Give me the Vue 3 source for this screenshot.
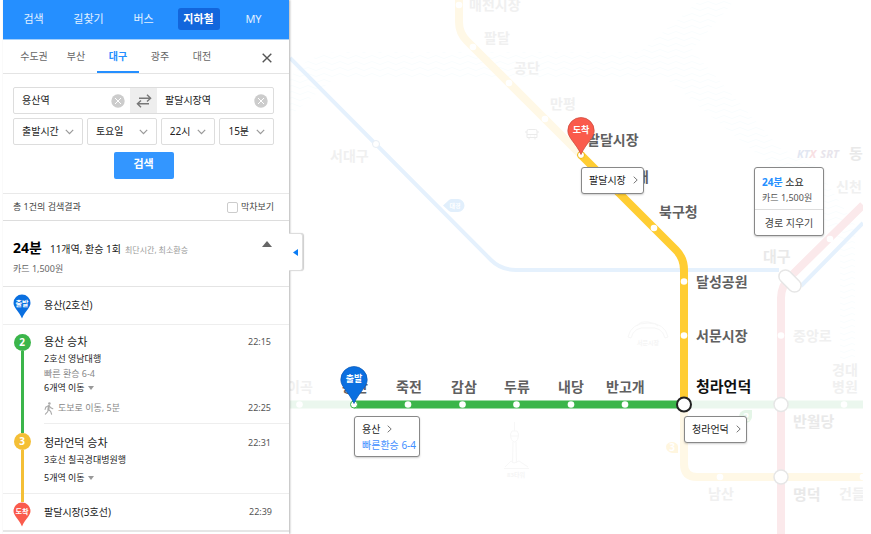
<template>
  <div class="page">
    <aside class="panel">
      <nav class="main-nav">
        <a v-for="menu in menus" :key="menu" href="#" :class="{ active: menu === '지하철' }"><span>{{ menu }}</span></a>
      </nav>

      <div class="city-bar">
        <a v-for="c in cities" :key="c" href="#" :class="{ active: c === city }" @click.prevent="city = c">{{ c }}</a>
        <button class="close" type="button" aria-label="닫기">
          <svg width="10" height="10" viewBox="0 0 10 10"><path d="M0.7 0.7L9.3 9.3M9.3 0.7L0.7 9.3" stroke="#555" stroke-width="1.4" /></svg>
        </button>
      </div>

      <form class="search" @submit.prevent>
        <div class="stations">
          <div class="field">
            <input v-model="from" type="text" aria-label="출발역" />
            <button type="button" class="clear" aria-label="출발역 지우기" @click="from = ''">
              <svg width="14" height="14" viewBox="0 0 14 14"><circle cx="7" cy="7" r="6.7" fill="#ccc" /><path d="M4 4l6 6M10 4l-6 6" stroke="#fff" /></svg>
            </button>
          </div>
          <button type="button" class="swap" aria-label="출발 도착 바꾸기" @click="swap">
            <svg width="16" height="14" viewBox="0 0 16 14" fill="none" stroke="#777" stroke-width="1.4">
              <path d="M3 4.3H14.5M11 0.8L14.6 4.3L11 7.6M13 9.7H1.5M5 6.4L1.4 9.7L5 13.2" />
            </svg>
          </button>
          <div class="field">
            <input v-model="to" type="text" aria-label="도착역" />
            <button type="button" class="clear" aria-label="도착역 지우기" @click="to = ''">
              <svg width="14" height="14" viewBox="0 0 14 14"><circle cx="7" cy="7" r="6.7" fill="#ccc" /><path d="M4 4l6 6M10 4l-6 6" stroke="#fff" /></svg>
            </button>
          </div>
        </div>
        <div class="times">
          <label v-for="s in selects" :key="s.label" class="pick" :class="s.size">
            <select :aria-label="s.label"><option>{{ s.value }}</option></select>
            <svg width="9" height="6" viewBox="0 0 9 6"><path d="M0.8 0.8L4.5 4.6L8.2 0.8" fill="none" stroke="#999" stroke-width="1.2" /></svg>
          </label>
        </div>
        <button class="submit" type="submit">검색</button>
      </form>

      <div class="result-bar">
        <span>총 1건의 검색결과</span>
        <label class="last-train"><input type="checkbox" />막차보기</label>
      </div>

      <section class="summary">
        <div class="summary-line">
          <strong>24분</strong>
          <span class="count">11개역, 환승 1회</span>
          <span class="tags">최단시간, 최소환승</span>
          <button type="button" aria-label="접기">
            <svg width="10" height="6" viewBox="0 0 10 6"><path d="M5 0L10 6H0z" fill="#666" /></svg>
          </button>
        </div>
        <div class="fare">카드 1,500원</div>
      </section>

      <div class="stop start">
        <div class="rail">
          <svg width="18" height="25" viewBox="0 0 28 38"><path :d="pinPath" fill="#0a6fe0" /><text x="14" y="18" class="pin-text">출발</text></svg>
        </div>
        <div class="stop-name">용산(2호선)</div>
      </div>

      <div class="step step-first">
        <div class="rail green">
          <i class="lead"></i><b class="line-no">2</b><i class="track"></i>
        </div>
        <div class="step-body">
          <div class="title">용산 승차<time>22:15</time></div>
          <div class="bound">2호선 영남대행</div>
          <div class="fast">빠른 환승 6-4</div>
          <button type="button" class="move">6개역 이동<svg width="6" height="4" viewBox="0 0 6 4"><path d="M0 0H6L3 4z" fill="#999" /></svg></button>
          <div class="walk">
            <svg width="10" height="13" viewBox="0 0 10 13" fill="none" stroke="#aaa" stroke-width="1.1" stroke-linecap="round">
              <circle cx="5.4" cy="1.5" r="1.3" fill="#aaa" stroke="none" />
              <path d="M4.9 4L4.4 7.4" stroke-width="2" />
              <path d="M4.5 7.6L6.6 9.4L7.6 12.2M4.3 7.6L3.6 9.8L1.4 12.2M4.4 3.8L1.8 5.2L1.1 7.4M5.4 4L6.8 5.8L8.8 6.8" />
            </svg>
            도보로 이동, 5분<time>22:25</time>
          </div>
        </div>
      </div>

      <div class="step step-second">
        <div class="rail yellow">
          <i class="lead from-green"></i><b class="line-no">3</b><i class="track"></i>
        </div>
        <div class="step-body">
          <div class="title">청라언덕 승차<time>22:31</time></div>
          <div class="bound">3호선 칠곡경대병원행</div>
          <button type="button" class="move">5개역 이동<svg width="6" height="4" viewBox="0 0 6 4"><path d="M0 0H6L3 4z" fill="#999" /></svg></button>
        </div>
      </div>

      <div class="stop end">
        <div class="rail">
          <i class="lead from-yellow"></i>
          <svg width="18" height="25" viewBox="0 0 28 38"><path :d="pinPath" fill="#fa5b4c" /><text x="14" y="18" class="pin-text">도착</text></svg>
        </div>
        <div class="stop-name">팔달시장(3호선)</div>
        <time>22:39</time>
      </div>
    </aside>

    <main class="map">
      <button class="fold" type="button" aria-label="패널 접기">
        <svg width="5" height="7" viewBox="0 0 5 7"><path d="M5 0V7L0 3.5z" fill="#0a7cf5" /></svg>
      </button>

      <svg class="canvas" width="573" height="534" viewBox="290 0 573 534">
        <defs>
          <pattern id="waves" width="16" height="6" patternUnits="userSpaceOnUse">
            <path d="M0 3Q4 0 8 3T16 3" fill="none" stroke="#f9fdfe" />
          </pattern>
        </defs>
        <path d="M290 77Q310 52 340 52H640L700 0H735L692 50L780 148L815 165L855 225V360H840V240L770 165L665 78H335L290 116z" fill="url(#waves)" />

        <!-- lines outside the route -->
        <g fill="none">
          <path d="M290 58L491 260Q501 270 516 270H779M801 286L863 223" stroke="#e5f1fd" stroke-width="4" />
          <path d="M781 534V298Q781 286 790 277L863 205" stroke="#fbe9eb" stroke-width="8" />
          <path d="M290 404.5H354M684 404.5H863" stroke="#ebf7ee" stroke-width="8" />
          <path d="M459 0V22Q459 33 467 41L581 155M684 404V464Q684 477 697 477H863" stroke="#fff8e6" stroke-width="8" />
        </g>

        <!-- selected route -->
        <g fill="none" stroke-width="8">
          <path d="M354 404.5H684" stroke="#3bb54a" />
          <path d="M581 155L676 250Q684 258 684 270V404" stroke="#ffcd33" />
        </g>

        <circle v-for="(d, i) in dots" :key="i" :cx="d[0]" :cy="d[1]" r="3.3" fill="#fff" />
        <circle cx="376" cy="144" r="3.5" fill="#fff" stroke="#e8eef4" />
        <circle cx="354" cy="404.5" r="3.5" fill="#fff" stroke="#3bb54a" />
        <circle cx="581" cy="155" r="3.5" fill="#fff" stroke="#f0b90f" />
        <circle cx="684" cy="404.5" r="7" fill="#fff" stroke="#222" stroke-width="2" />
        <circle cx="781" cy="404.5" r="7" fill="#fff" stroke="#e6e6e6" stroke-width="1.5" />
        <circle cx="781" cy="477" r="7" fill="#fff" stroke="#e6e6e6" stroke-width="1.5" />
        <rect x="777" y="274.5" width="26" height="13" rx="6.5" transform="rotate(45 790 281)" fill="#fff" stroke="#e6e6e6" stroke-width="1.5" />

        <!-- line badges -->
        <path d="M443 205.5L449 200Q450 199 452 199H458A6.5 6.5 0 0 1 458 212H452Q450 212 449 211z" fill="#e1effc" />
        <text x="455" y="208" class="tiny white">대경</text>
        <path d="M666 446A6.5 6.5 0 0 1 678 446V453H672A6.5 6.5 0 0 1 666 446z" fill="#fff6df" />
        <text x="672" y="451" class="badge white">3</text>
        <path d="M752 410V417A6.5 6.5 0 1 1 745 410z" fill="#e4f5e7" />
        <text x="746" y="421" class="badge white">2</text>

        <!-- landmarks -->
        <g fill="none" stroke="#ebebeb">
          <path d="M528.5 129.5H535.5Q537 129.5 537 131V137.5H527V131Q527 129.5 528.5 129.5zM527 134.5H537M526 131V133M538 131V133M529 137.5V139.5M535 137.5V139.5M530 136H530.5M534 136H534.5" />
        </g>
        <g fill="none" stroke="#f7f7f7">
          <path d="M514.5 422V431M512 431H517L518.5 434Q518.5 441 514.5 442Q510.5 441 510.5 434zM511 436H518M513 442L512.5 463M516 442L516.5 463M505 467L511 461L514 463L519 461L528 467M504 468.5H529" />
          <path d="M628 337Q631 323 648 323T668 337L665 338Q662 326 648 328Q634 326 631 338zM637 326Q640 321 648 322T658 326" />
        </g>
        <text x="516" y="477" class="tiny pale">83타워</text>
        <text x="648" y="345" class="tiny pale">서문시장</text>
        <text x="797" y="158" class="rail-logo"><tspan fill="#e2e7f2">KT</tspan><tspan fill="#f8e0e3">X</tspan><tspan dx="4" fill="#e8e5ec">SRT</tspan></text>

        <text v-for="l in labels" :key="l.name" :x="l.x" :y="l.y" :class="['station', l.type]">{{ l.name }}</text>

        <!-- pins -->
        <g transform="translate(567 117)"><path :d="pinPath" fill="#fa5b4c" stroke="#c9473b" stroke-width="0.7" /><text x="14" y="16" class="map-pin">도착</text></g>
        <g transform="translate(340 366)"><path :d="pinPath" fill="#0a6fe0" stroke="#0858b4" stroke-width="0.7" /><text x="14" y="16" class="map-pin">출발</text></g>
      </svg>

      <a href="#" class="callout arrive">팔달시장<svg class="more" width="5" height="8" viewBox="0 0 5 8"><path d="M0.7 0.7L4.2 4L0.7 7.3" fill="none" stroke="#777" /></svg></a>
      <a href="#" class="callout depart">
        <span>용산<svg class="more" width="5" height="8" viewBox="0 0 5 8"><path d="M0.7 0.7L4.2 4L0.7 7.3" fill="none" stroke="#777" /></svg></span>
        <em>빠른환승 6-4</em>
      </a>
      <a href="#" class="callout transfer">청라언덕<svg class="more" width="5" height="8" viewBox="0 0 5 8"><path d="M0.7 0.7L4.2 4L0.7 7.3" fill="none" stroke="#777" /></svg></a>

      <div class="callout info">
        <p class="info-time"><strong>24분</strong> 소요</p>
        <p class="info-fare">카드 1,500원</p>
        <button type="button">경로 지우기</button>
      </div>
    </main>
  </div>
</template>

<script setup>
import { ref } from 'vue'

const menus = ['검색', '길찾기', '버스', '지하철', 'MY']
const cities = ['수도권', '부산', '대구', '광주', '대전']
const city = ref('대구')

const from = ref('용산역')
const to = ref('팔달시장역')

const swap = () => {
  const temp = from.value
  from.value = to.value
  to.value = temp
}

const selects = [
  { label: '시간 기준', value: '출발시간', size: 'wide' },
  { label: '요일', value: '토요일', size: 'wide' },
  { label: '시', value: '22시', size: 'narrow' },
  { label: '분', value: '15분', size: 'narrow' }
]

const pinPath = 'M14 0.5A13.2 13.2 0 0 1 27.2 13.7C27.2 21 19 26 14 37.5C9 26 0.8 21 0.8 13.7A13.2 13.2 0 0 1 14 0.5z'

const dots = [
  [459, 5], [473, 47], [509, 83], [545, 119], [617, 191], [654, 228],
  [684, 281.5], [684, 335.5],
  [299.5, 404.5], [408, 404.5], [462.5, 404.5], [516.5, 404.5], [571, 404.5], [625, 404.5], [844, 404.5],
  [830, 239], [781, 335.5], [720, 477], [863, 477]
]

const labels = [
  { name: '매천시장', x: 469, y: 10, type: 'off' },
  { name: '팔달', x: 484, y: 43, type: 'off' },
  { name: '공단', x: 514, y: 73, type: 'off' },
  { name: '만평', x: 550, y: 109, type: 'off' },
  { name: '서대구', x: 330, y: 161, type: 'off' },
  { name: '이곡', x: 287, y: 392, type: 'off' },
  { name: '동', x: 849, y: 159, type: 'off major' },
  { name: '신천', x: 836, y: 192, type: 'off' },
  { name: '대구', x: 763, y: 262, type: 'off major' },
  { name: '중앙로', x: 793, y: 341, type: 'off' },
  { name: '경대', x: 832, y: 375, type: 'off' },
  { name: '병원', x: 832, y: 392, type: 'off' },
  { name: '반월당', x: 793, y: 427, type: 'off major' },
  { name: '명덕', x: 793, y: 500, type: 'off major' },
  { name: '남산', x: 708, y: 499, type: 'off' },
  { name: '건들', x: 839, y: 499, type: 'off' },
  { name: '팔달시장', x: 587, y: 145, type: 'on' },
  { name: '원대', x: 623, y: 182, type: 'on' },
  { name: '북구청', x: 659, y: 217, type: 'on' },
  { name: '달성공원', x: 696, y: 287, type: 'on' },
  { name: '서문시장', x: 696, y: 341, type: 'on' },
  { name: '청라언덕', x: 696, y: 392, type: 'hub' },
  { name: '용산', x: 342, y: 392, type: 'on' },
  { name: '죽전', x: 396, y: 392, type: 'on' },
  { name: '감삼', x: 451, y: 392, type: 'on' },
  { name: '두류', x: 504, y: 392, type: 'on' },
  { name: '내당', x: 558, y: 392, type: 'on' },
  { name: '반고개', x: 606, y: 392, type: 'on' }
]
</script>

<style>
body {
  background: #fff;
}
</style>

<style scoped>
.page {
  display: flex;
  min-height: 100vh;
  padding: 0 8px 0 3px;
  box-sizing: border-box;
  overflow: hidden;
  font-family: "Noto Sans", "Noto Sans CJK KR", sans-serif;
  font-size: 10px;
  line-height: 14px;
  color: #222;
}

.page * {
  box-sizing: border-box;
}

a {
  color: inherit;
  text-decoration: none;
}

button,
input,
select {
  font: inherit;
  color: inherit;
  margin: 0;
  padding: 0;
  border: 0;
  background: none;
}

button {
  cursor: pointer;
}

svg {
  display: block;
  flex: none;
}

.panel {
  position: relative;
  z-index: 1;
  flex: none;
  width: 286px;
  background: #fff;
  box-shadow: 1px 0 2px rgba(0, 0, 0, 0.3);
}

.main-nav {
  display: flex;
  height: 40px;
  padding: 0 0 2px 3px;
  background: #258fff;
  border-bottom: 1px solid #a5d0fb;
  font-size: 11px;
  color: #e3f1ff;
}

.main-nav a {
  display: flex;
  flex: none;
  width: 55px;
  align-items: center;
  justify-content: center;
}

.main-nav span {
  width: 42px;
  line-height: 22px;
  border-radius: 3px;
  text-align: center;
}

.main-nav .active span {
  background: #1266dc;
  color: #fff;
  font-weight: 700;
}

.city-bar {
  display: flex;
  height: 34px;
  padding-left: 10px;
  border-bottom: 1px solid #e4e4e4;
  color: #666;
}

.city-bar a {
  width: 42px;
  line-height: 32px;
  text-align: center;
}

.city-bar .active {
  border-bottom: 2px solid #258fff;
  color: #258fff;
  font-weight: 700;
}

.close {
  margin: 2px 17px 0 auto;
}

.search {
  display: flex;
  flex-direction: column;
  gap: 4px;
  padding: 13px 15px 14px 10px;
  border-bottom: 1px solid #e9e9e9;
}

.stations {
  display: flex;
  height: 27px;
  border: 1px solid #ddd;
  border-radius: 2px;
}

.field {
  display: flex;
  flex: 1;
  min-width: 0;
  align-items: center;
  padding: 0 5px 0 8px;
}

.field input {
  flex: 1;
  min-width: 0;
  height: 23px;
  padding-bottom: 2px;
  outline: none;
}

.swap {
  display: flex;
  width: 27px;
  align-items: center;
  justify-content: center;
  background: #eee;
}

.times {
  display: flex;
  gap: 4px;
}

.pick {
  position: relative;
  display: flex;
  align-items: center;
  height: 27px;
  border: 1px solid #ddd;
  border-radius: 2px;
}

.pick.wide {
  flex: 71;
}

.pick.narrow {
  flex: 55;
}

.pick select {
  width: 100%;
  height: 100%;
  padding: 0 0 2px 8px;
  appearance: none;
  outline: none;
}

.pick svg {
  position: absolute;
  right: 8px;
  pointer-events: none;
}

.submit {
  align-self: center;
  width: 60px;
  height: 27px;
  margin-top: 3px;
  padding-bottom: 3px;
  background: #3396ff;
  border-radius: 2px;
  color: #fff;
  font-size: 11px;
  font-weight: 700;
}

.result-bar {
  display: flex;
  align-items: center;
  justify-content: space-between;
  height: 27px;
  padding: 0 15px 0 10px;
  border-bottom: 1px solid #ddd;
  font-size: 9px;
  color: #444;
}

.last-train {
  display: flex;
  align-items: center;
  gap: 3px;
}

.last-train input {
  width: 11px;
  height: 11px;
  appearance: none;
  border: 1px solid #ccc;
  border-radius: 2px;
}

.summary {
  height: 66px;
  padding: 17px 15px 0 10px;
  border-bottom: 1px solid #e4e4e4;
}

.summary-line {
  display: flex;
  align-items: baseline;
  line-height: 20px;
}

.summary-line strong {
  margin-right: 8px;
  font-size: 14px;
  color: #000;
}

.summary-line .tags {
  margin-left: 4px;
  font-size: 8px;
  color: #999;
}

.summary-line button {
  align-self: flex-start;
  margin: 3px 2px 0 auto;
}

.fare {
  font-size: 9px;
  line-height: 18px;
  color: #666;
}

time {
  margin-left: auto;
  font-size: 9px;
  color: #555;
}

.stop {
  display: flex;
  height: 38px;
  padding: 0 17px 0 10px;
  gap: 13px;
}

.stop.start {
  border-bottom: 1px solid #eee;
}

.stop.start .rail {
  padding-top: 7px;
}

.stop.end {
  border-bottom: 2px solid #e6e6e6;
}

.stop-name,
.stop time {
  line-height: 36px;
}

.rail {
  display: flex;
  flex: none;
  flex-direction: column;
  align-items: center;
  width: 18px;
}

.lead {
  flex: none;
  width: 3px;
  height: 9px;
}

.from-green {
  background: #3bb54a;
}

.from-yellow {
  height: 8px;
  background: #f4bf36;
}

.track {
  flex: 1;
  width: 3px;
}

.line-no {
  width: 17px;
  height: 17px;
  border-radius: 50%;
  color: #fff;
  line-height: 17px;
  text-align: center;
}

.green .line-no,
.green .track {
  background: #3bb54a;
}

.yellow .line-no,
.yellow .track {
  background: #f4bf36;
}

.pin-text {
  fill: #fff;
  font-size: 11px;
  font-weight: 700;
  text-anchor: middle;
}

.step {
  display: flex;
  padding-left: 10px;
  gap: 13px;
  border-bottom: 1px solid #eee;
}

.step-first {
  border-bottom: 0;
}

.step-second .rail {
  margin-bottom: -1px;
}

.step-body {
  display: flex;
  flex: 1;
  flex-direction: column;
  align-items: stretch;
  padding: 8px 0 6px;
  font-size: 9px;
}

.step-first .step-body {
  border-bottom: 1px solid #eee;
}

.step-second .step-body {
  padding: 10px 0 8px;
}

.title {
  display: flex;
  padding-right: 18px;
  font-size: 11px;
  line-height: 18px;
}

.bound {
  line-height: 16px;
}

.fast {
  color: #888;
}

.move {
  display: flex;
  align-items: center;
  gap: 3px;
}

.step-second .move {
  margin-top: 3px;
}

.walk {
  display: flex;
  align-items: center;
  gap: 4px;
  margin-top: 4px;
  padding-right: 18px;
  line-height: 18px;
  color: #888;
}

.map {
  position: relative;
  flex: 1;
  min-width: 0;
  overflow: hidden;
}

.canvas {
  margin-left: 1px;
}

.fold {
  position: absolute;
  z-index: 2;
  top: 233px;
  left: 0;
  display: flex;
  align-items: center;
  width: 14px;
  height: 38px;
  padding-left: 4px;
  background: #fff;
  border: 1px solid #ddd;
  border-left: 0;
  border-radius: 0 3px 3px 0;
  box-shadow: 1px 0 1px rgba(0, 0, 0, 0.2);
}

.station {
  font-size: 14px;
  font-weight: 700;
}

.station.on {
  fill: #606060;
}

.station.off {
  fill: #f0f0f0;
}

.station.major {
  font-size: 15px;
  fill: #e9e9e9;
}

.station.hub {
  font-size: 15px;
  fill: #111;
}

.tiny {
  font-size: 6px;
  font-weight: 700;
  text-anchor: middle;
}

.badge {
  font-size: 10px;
  font-weight: 700;
  text-anchor: middle;
}

.white {
  fill: #fff;
}

.pale {
  fill: #f5f5f5;
}

.rail-logo {
  font-size: 11px;
  font-style: italic;
  font-weight: 700;
}

.map-pin {
  fill: #fff;
  font-size: 9px;
  font-weight: 700;
  text-anchor: middle;
}

.callout {
  position: absolute;
  background: #fff;
  border: 1px solid #888;
  border-radius: 3px;
  box-shadow: 0 1px 2px rgba(0, 0, 0, 0.2);
}

.more {
  display: inline-block;
  margin-left: 7px;
}

.arrive,
.transfer {
  width: 63px;
  padding-left: 7px;
  line-height: 25px;
}

.arrive {
  top: 167px;
  left: 292px;
}

.transfer {
  top: 416px;
  left: 395px;
}

.depart {
  top: 416px;
  left: 65px;
  width: 66px;
  padding: 4px 0 3px 7px;
  line-height: 16px;
}

.depart span,
.depart em {
  display: block;
}

.depart em {
  font-style: normal;
  color: #3f8fff;
}

.info {
  top: 167px;
  left: 465px;
  width: 70px;
}

.info p {
  margin: 0;
  padding-left: 7px;
  line-height: 16px;
}

.info .info-time {
  padding-top: 6px;
}

.info-time strong {
  color: #258fff;
}

.info-fare {
  font-size: 9px;
  color: #555;
}

.info button {
  width: 100%;
  height: 26px;
  margin-top: 3px;
  border-top: 1px solid #ddd;
  color: #444;
}
</style>
